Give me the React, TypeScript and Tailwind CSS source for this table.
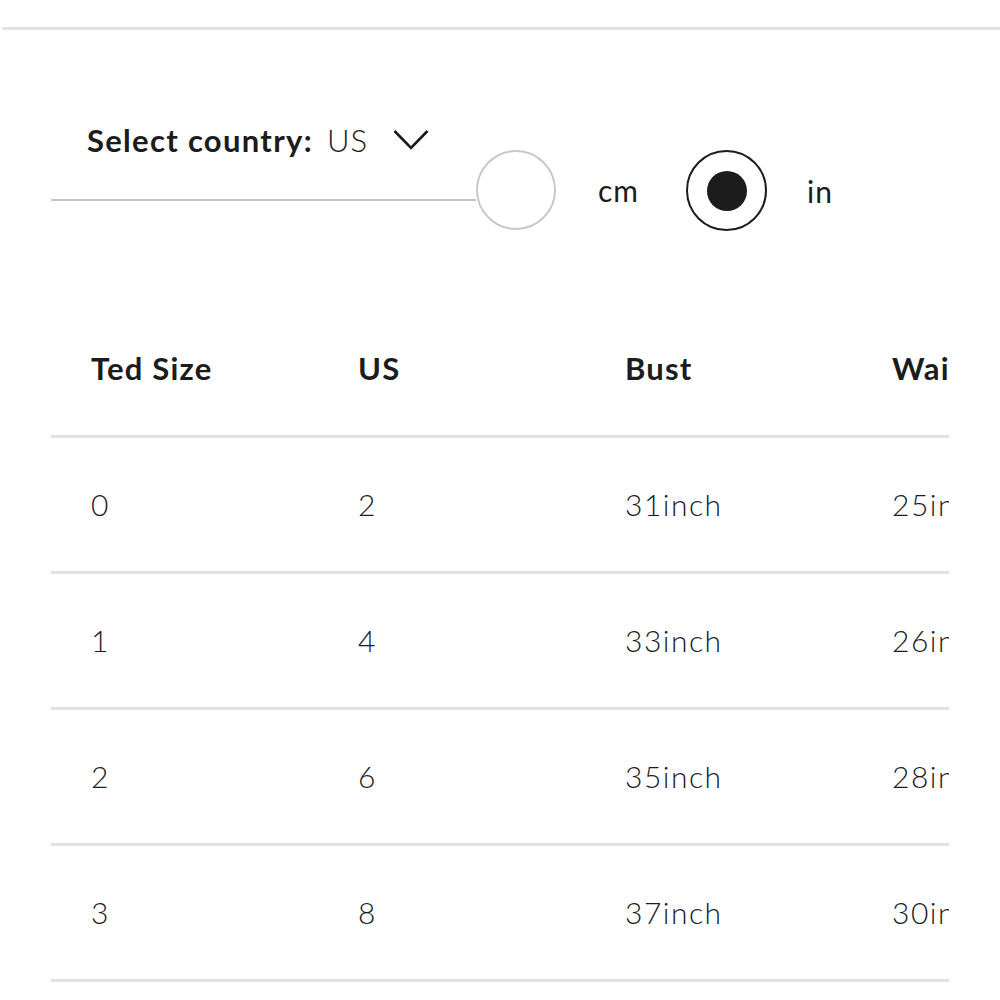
import { useState } from "react";

const rows = [
  { ted: "0", us: "2", bust: "31inch", waist: "25inch" },
  { ted: "1", us: "4", bust: "33inch", waist: "26inch" },
  { ted: "2", us: "6", bust: "35inch", waist: "28inch" },
  { ted: "3", us: "8", bust: "37inch", waist: "30inch" },
];

const Chevron = () => (
  <svg width="36" height="24" viewBox="0 0 36 24" fill="none" className="ml-[25px]">
    <polyline points="1.5,3 18,20 34.5,3" stroke="#1a1a1a" strokeWidth="2.6" strokeLinejoin="miter" />
  </svg>
);

const App = () => {
  const [unit, setUnit] = useState<"cm" | "in">("in");

  return (
    <div className="w-[1000px] h-[1000px] bg-white overflow-hidden text-[#1c1c1c] font-['Lato','Liberation_Sans',sans-serif]">
      <div className="h-[27px]" />
      <div className="h-[3px] ml-[2px] bg-[#e2e2e2]" />

      {/* Country + unit selector */}
      <div className="flex items-start mt-[90px] pl-[51px]">
        <div className="w-[425px] flex flex-col">
          <div className="flex items-center pl-[36px] h-[40px] text-[31px] leading-none">
            <span className="font-bold tracking-[1.3px]">Select country:</span>
            <span className="ml-[14px] font-light tracking-[1px]">US</span>
            <Chevron />
          </div>
          <div className="mt-[39px] h-[2px] bg-[#c4c4c4]" />
        </div>

        <button
          onClick={() => setUnit("cm")}
          className="mt-[30px] flex items-center"
        >
          <span
            className={`w-[80px] h-[80px] rounded-full border-2 flex items-center justify-center ${
              unit === "cm" ? "border-[#1c1c1c]" : "border-[#c8c8c8]"
            }`}
          >
            {unit === "cm" && <span className="w-[40px] h-[40px] rounded-full bg-[#1c1c1c]" />}
          </span>
          <span className="ml-[42px] text-[30px] leading-none tracking-[1px]">cm</span>
        </button>

        <button
          onClick={() => setUnit("in")}
          className="mt-[30px] ml-[47px] flex items-center"
        >
          <span
            className={`w-[81px] h-[81px] rounded-full border-2 flex items-center justify-center ${
              unit === "in" ? "border-[#1c1c1c]" : "border-[#c8c8c8]"
            }`}
          >
            {unit === "in" && <span className="w-[40px] h-[40px] rounded-full bg-[#1c1c1c]" />}
          </span>
          <span className="ml-[40px] text-[30px] leading-none tracking-[1px]">in</span>
        </button>
      </div>

      {/* Size table */}
      <div className="mt-[70px] ml-[51px] w-[898px] overflow-hidden">
        <div className="w-[1200px]">
          <div className="grid grid-cols-[267px_267px_267px_267px] h-[137px] items-center border-b-[3px] border-[#e2e2e2] text-[31px] font-bold tracking-[1.2px]">
            <div className="pl-[40px]">Ted Size</div>
            <div className="pl-[40px]">US</div>
            <div className="pl-[40px]">Bust</div>
            <div className="pl-[40px]">Waist</div>
          </div>
          {rows.map((r) => (
            <div
              key={r.ted}
              className="grid grid-cols-[267px_267px_267px_267px] h-[136px] items-center border-b-[3px] border-[#e2e2e2] text-[30px] font-light tracking-[1.5px]"
            >
              <div className="pl-[40px]">{r.ted}</div>
              <div className="pl-[40px]">{r.us}</div>
              <div className="pl-[40px]">{r.bust}</div>
              <div className="pl-[40px]">{r.waist}</div>
            </div>
          ))}
        </div>
      </div>
    </div>
  );
};

export default App;
